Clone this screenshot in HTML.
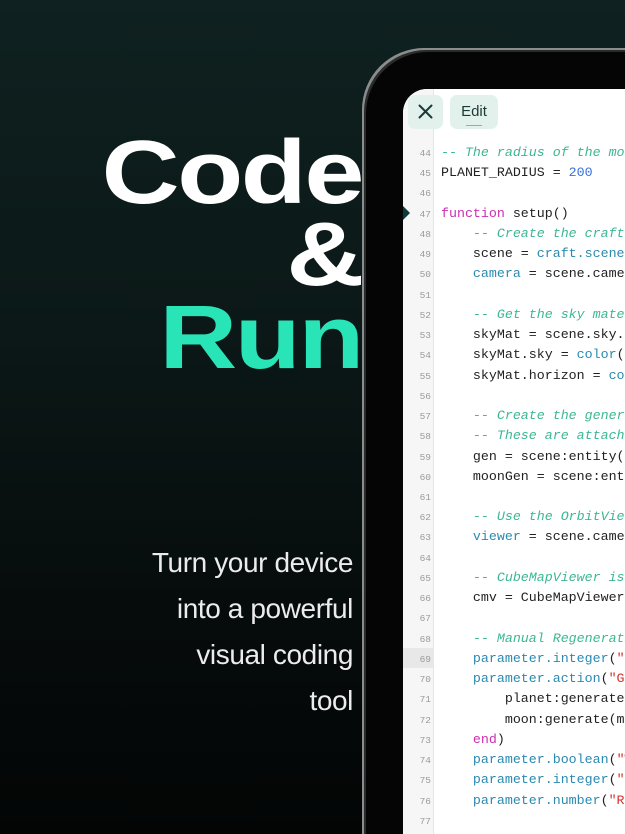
<!DOCTYPE html>
<html><head><meta charset="utf-8"><style>
html,body{margin:0;padding:0;width:625px;height:834px;overflow:hidden}
body{position:relative;background:linear-gradient(180deg,#0f2120 0%,#0b1817 40%,#060b0b 75%,#030505 100%);font-family:"Liberation Sans",sans-serif}
.big{position:absolute;right:263px;font-weight:bold;font-size:90px;line-height:1;letter-spacing:-2px;transform:scaleX(1.2);transform-origin:right top;white-space:nowrap}
.sub{position:absolute;right:272px;top:540px;text-align:right;color:#ececec;font-size:28px;line-height:46px;letter-spacing:-0.4px;font-weight:300}
.dev{position:absolute;left:362px;top:48px;width:263px;height:786px;border-radius:62px 0 0 0;background:#050505;box-shadow:inset 2px 2px 0 0 #8a8d8d,inset 4px 4px 0 0 #2a2c2c}
.scr{position:absolute;left:403px;top:89px;width:222px;height:745px;border-radius:24px 0 0 0;background:#fff;overflow:hidden}
.gut{position:absolute;left:0;top:0;width:30px;height:745px;background:#f6f6f6;border-right:1px solid #e6e6e6}
.btn{position:absolute;top:6px;height:34px;background:#e3f1ed;border-radius:7px;color:#1c3a34}
.code{position:absolute;left:0;top:54px;font-family:"Liberation Mono",monospace;font-size:13.3px;width:222px;overflow:hidden}
.l{height:20.24px;line-height:20.24px;position:relative;white-space:pre}
.n{display:inline-block;width:28px;text-align:right;font-size:9.5px;color:#9a9a9a;margin-right:10px}
.c{color:#3cb793;font-style:italic}.k{color:#cc2fb1}.u{color:#3b6fd9}.f{color:#2a8ab0}.s{color:#d3322f}
.t{color:#222}
</style></head><body>
<div class="big" style="top:128px;color:#fff">Code</div>
<div class="big" style="top:210px;color:#fff">&amp;</div>
<div class="big" style="top:293px;color:#28e4b6">Run</div>
<div class="sub">Turn your device<br>into a powerful<br>visual coding<br>tool</div>
<div class="dev"></div>
<div class="scr">
<div class="gut"></div>
<div style="position:absolute;left:0;top:559px;width:30px;height:20px;background:#e8e8e8"></div>
<div style="position:absolute;left:0;top:117px;width:0;height:0;border-top:7px solid transparent;border-bottom:7px solid transparent;border-left:7px solid #0f3a3a"></div>
<div class="btn" style="left:5px;width:35px"><svg width="35" height="34" viewBox="0 0 35 34"><path d="M11.5 10.5L23.5 22.5M23.5 10.5L11.5 22.5" stroke="#1c3a34" stroke-width="2" stroke-linecap="round"/></svg></div>
<div class="btn" style="left:47px;width:48px;font-size:15px;line-height:34px;text-align:center">Edit<div style="position:absolute;left:16px;top:30px;width:16px;height:1px;background:#9aa"></div></div>
<div class="code t">
<div class="l"><span class="n">44</span><span class="c">-- The radius of the moon</span></div>
<div class="l"><span class="n">45</span>PLANET_RADIUS = <span class="u">200</span></div>
<div class="l"><span class="n">46</span></div>
<div class="l"><span class="n">47</span><span class="k">function</span> setup()</div>
<div class="l"><span class="n">48</span>    <span class="c">-- Create the craft</span></div>
<div class="l"><span class="n">49</span>    scene = <span class="f">craft.scene</span></div>
<div class="l"><span class="n">50</span>    <span class="f">camera</span> = scene.camera</div>
<div class="l"><span class="n">51</span></div>
<div class="l"><span class="n">52</span>    <span class="c">-- Get the sky material</span></div>
<div class="l"><span class="n">53</span>    skyMat = scene.sky.material</div>
<div class="l"><span class="n">54</span>    skyMat.sky = <span class="f">color</span>(</div>
<div class="l"><span class="n">55</span>    skyMat.horizon = <span class="f">color</span>(</div>
<div class="l"><span class="n">56</span></div>
<div class="l"><span class="n">57</span>    <span class="c">-- Create the generators</span></div>
<div class="l"><span class="n">58</span>    <span class="c">-- These are attached</span></div>
<div class="l"><span class="n">59</span>    gen = scene:entity()</div>
<div class="l"><span class="n">60</span>    moonGen = scene:entity()</div>
<div class="l"><span class="n">61</span></div>
<div class="l"><span class="n">62</span>    <span class="c">-- Use the OrbitViewer</span></div>
<div class="l"><span class="n">63</span>    <span class="f">viewer</span> = scene.camera</div>
<div class="l"><span class="n">64</span></div>
<div class="l"><span class="n">65</span>    <span class="c">-- CubeMapViewer is</span></div>
<div class="l"><span class="n">66</span>    cmv = CubeMapViewer</div>
<div class="l"><span class="n">67</span></div>
<div class="l"><span class="n">68</span>    <span class="c">-- Manual Regeneration</span></div>
<div class="l"><span class="n">69</span>    <span class="f">parameter.integer</span>(<span class="s">"S</span></div>
<div class="l"><span class="n">70</span>    <span class="f">parameter.action</span>(<span class="s">"G</span></div>
<div class="l"><span class="n">71</span>        planet:generate(</div>
<div class="l"><span class="n">72</span>        moon:generate(m</div>
<div class="l"><span class="n">73</span>    <span class="k">end</span>)</div>
<div class="l"><span class="n">74</span>    <span class="f">parameter.boolean</span>(<span class="s">"W</span></div>
<div class="l"><span class="n">75</span>    <span class="f">parameter.integer</span>(<span class="s">"L</span></div>
<div class="l"><span class="n">76</span>    <span class="f">parameter.number</span>(<span class="s">"R</span></div>
<div class="l"><span class="n">77</span></div>
</div>
</div>
</body></html>
